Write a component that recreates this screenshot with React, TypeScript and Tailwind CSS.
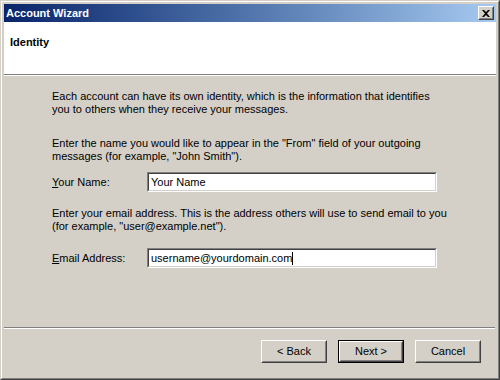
import React from "react";

const font = { fontFamily: '"Liberation Sans", Arial, sans-serif' };

function Bevel({ children, className = "" }: { children: React.ReactNode; className?: string }) {
  // classic raised 3D button edge
  return (
    <div className={`border border-t-white border-l-white border-r-[#404040] border-b-[#404040] ${className}`}>
      <div className="w-full h-full border border-t-[#d4d0c8] border-l-[#d4d0c8] border-r-[#808080] border-b-[#808080] flex items-center justify-center">
        {children}
      </div>
    </div>
  );
}

function Field({ value, caret }: { value: string; caret?: boolean }) {
  return (
    <div className="w-[290px] h-[20px] border border-t-[#808080] border-l-[#808080] border-r-white border-b-white">
      <div className="w-full h-full bg-white border border-t-[#404040] border-l-[#404040] border-r-[#d4d0c8] border-b-[#d4d0c8] flex items-center pl-[2px] text-[11px] text-black">
        <span>{value}</span>
        {caret && <span className="w-px h-[13px] bg-black" />}
      </div>
    </div>
  );
}

function WizardButton({ label, isDefault }: { label: string; isDefault?: boolean }) {
  const btn = (
    <Bevel className={isDefault ? "w-[64px] h-[21px]" : "w-[66px] h-[23px]"}>
      <span className="text-[11px] text-black">{label}</span>
    </Bevel>
  );
  if (isDefault) {
    return <div className="border border-black">{btn}</div>;
  }
  return btn;
}

export default function App() {
  return (
    <div style={font} className="w-[500px] h-[380px] border border-t-[#d4d0c8] border-l-[#d4d0c8] border-r-[#404040] border-b-[#404040] bg-[#d4d0c8]">
      <div className="w-full h-full border border-t-white border-l-white border-r-[#808080] border-b-[#808080] p-[2px] flex flex-col">
        {/* title bar */}
        <div className="h-[18px] bg-linear-to-r from-[#0a246a] to-[#a6caf0] flex items-center justify-between pl-[2px] pr-[2px]">
          <span className="text-white text-[11px] font-bold">Account Wizard</span>
          <Bevel className="w-[16px] h-[14px] bg-[#d4d0c8]">
            <svg width="8" height="7" viewBox="0 0 8 7">
              <path d="M0 0h2l2 2 2-2h2L5 3.5 8 7H6L4 5 2 7H0l3-3.5z" fill="black" />
            </svg>
          </Bevel>
        </div>

        {/* header */}
        <div className="h-[53px] bg-white border-b border-[#808080] pl-[6px] pt-[12px] leading-[13px]">
          <span className="text-[11px] font-bold text-black">Identity</span>
        </div>
        <div className="h-px bg-white" />

        {/* body */}
        <div className="flex-1 flex flex-col pl-[48px] pt-[14px] text-[11px] leading-[13px] text-black">
          <p>
            Each account can have its own identity, which is the information that identifies
            <br />
            you to others when they receive your messages.
          </p>
          <p className="mt-[21px]">
            Enter the name you would like to appear in the "From" field of your outgoing
            <br />
            messages (for example, "John Smith").
          </p>
          <div className="mt-[9px] flex items-center">
            <span className="w-[95px]">
              <span className="underline">Y</span>our Name:
            </span>
            <Field value="Your Name" />
          </div>
          <p className="mt-[15px]">
            Enter your email address. This is the address others will use to send email to you
            <br />
            (for example, "user@example.net").
          </p>
          <div className="mt-[15px] flex items-center">
            <span className="w-[95px]">
              <span className="underline">E</span>mail Address:
            </span>
            <Field value="username@yourdomain.com" caret />
          </div>
        </div>

        {/* footer */}
        <div className="h-px bg-[#808080] mr-[1px]" />
        <div className="h-px bg-white mr-[1px]" />
        <div className="h-[47px] flex items-start justify-end gap-[12px] pt-[11px] pr-[15px]">
          <WizardButton label="< Back" />
          <div className="-ml-[1px]">
            <WizardButton label="Next >" isDefault />
          </div>
          <div className="-ml-[1px]">
            <WizardButton label="Cancel" />
          </div>
        </div>
      </div>
    </div>
  );
}
